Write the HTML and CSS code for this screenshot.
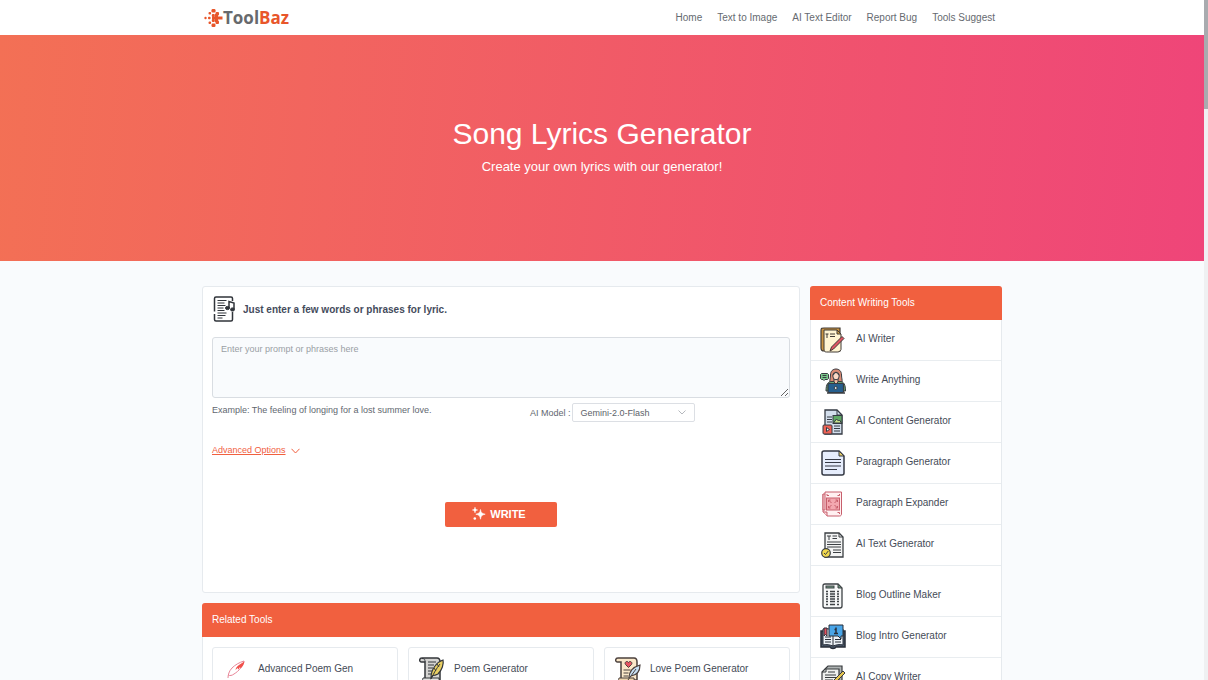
FILE: index.html
```html
<!DOCTYPE html>
<html lang="en">
  <head>
    <meta charset="UTF-8" />
    <meta name="viewport" content="width=device-width, initial-scale=1.0" />
    <title>Song Lyrics Generator - ToolBaz</title>
    <link rel="stylesheet" href="styles.css">
  </head>

  <body>
    <div class="page">
      <header class="header">
        <div class="container header-row">
          <a href="#" class="logo">
            <svg class="logo-mark" viewBox="0 0 19 20" aria-hidden="true">
              <g fill="#e8562a">
                <path d="M11 6h3v2.500h4.500v3H14V14h-3v-2.500H8v-3h3z" />
                <rect x="7.500" y="1" width="4" height="3.500" rx="1.200" />
                <rect x="7.500" y="15.500" width="4" height="3.500" rx="1.200" />
                <rect x="11.500" y="4" width="3.500" height="3.500" rx="1" />
                <rect x="11.500" y="12.500" width="3.500" height="3.500" rx="1" />
                <rect x="7.800" y="6" width="3" height="3" rx="1" />
                <rect x="7.800" y="11" width="3" height="3" rx="1" />
                <rect x="4.500" y="4" width="2.600" height="2.600" rx="1" />
                <rect x="4.500" y="13.400" width="2.600" height="2.600" rx="1" />
                <rect x="4" y="8.700" width="2.600" height="2.600" rx="1" />
                <circle cx="1.500" cy="10" r="1.200" />
              </g>
            </svg>
            <span class="logo-text">Tool<span class="logo-accent">Baz</span></span>
          </a>
          <nav class="nav">
            <a href="#">Home</a>
            <a href="#">Text to Image</a>
            <a href="#">AI Text Editor</a>
            <a href="#">Report Bug</a>
            <a href="#">Tools Suggest</a>
          </nav>
        </div>
      </header>

      <section class="hero">
        <h1>Song Lyrics Generator</h1>
        <p>Create your own lyrics with our generator!</p>
      </section>

      <div class="container layout">
        <main class="main">
          <form class="panel generator">
            <div class="generator-title">
              <svg class="icon" viewBox="0 0 26 26" fill="none" stroke="#30343a" aria-hidden="true">
                <path d="M20.500 5V2.500c0-1-.5-1.500-1.500-1.500H4C3 1 2.500 1.500 2.500 2.500v13M2.500 18v5.500c0 1 .5 1.500 1.500 1.500h15c1 0 1.500-.5 1.500-1.500V16" stroke-width="1.500" />
                <path d="M5.500 4.500h9M5.500 7h7M5.500 9.500h8M5.500 12h6M5.500 14.500h7M5.500 17h9M5.500 19.500h8M5.500 22h5" />
                <path d="M17 12V5.500l5 1.500v6" stroke-width="1.500" />
                <ellipse cx="15.500" cy="12" rx="2" ry="1.600" fill="#30343a" />
                <ellipse cx="20.500" cy="13.500" rx="2" ry="1.600" fill="#30343a" />
              </svg>
              <label for="prompt">Just enter a few words or phrases for lyric.</label>
            </div>
            <textarea id="prompt" class="prompt" placeholder="Enter your prompt or phrases here"></textarea>
            <div class="options">
              <p class="example">Example: The feeling of longing for a lost summer love.</p>
              <div class="model">
                <label for="model">AI Model :</label>
                <div class="select-wrap">
                  <select id="model">
                    <option>Gemini-2.0-Flash</option>
                  </select>
                  <svg class="select-arrow" viewBox="0 0 8 5" fill="none" stroke="#b5b8bd" aria-hidden="true">
                    <path d="M.5.5 4 4 7.500.5" />
                  </svg>
                </div>
              </div>
            </div>
            <a href="#" class="advanced">
              <span>Advanced Options</span>
              <svg viewBox="0 0 9 6" fill="none" stroke="#f1603f" aria-hidden="true"><path d="M.5.8 4.500 5 8.500.8" /></svg>
            </a>
            <button type="button" class="write-btn">
              <svg viewBox="0 0 14 14" fill="#fff" aria-hidden="true">
                <path d="M8.500 2.500c.5 3.200 1.300 4 4.700 4.700-3.400.7-4.200 1.500-4.700 5-.5-3.500-1.300-4.300-4.700-5 3.400-.7 4.200-1.500 4.700-4.700z" stroke="#fff" stroke-width=".6" />
                <path d="M3 0c.3 2 .9 2.600 2.800 3C3.900 3.400 3.300 4 3 6 2.700 4 2.100 3.400.2 3 2.100 2.600 2.700 2 3 0z" stroke="#fff" stroke-width=".4" />
                <circle cx="2.800" cy="11.500" r="1.300" />
              </svg>
              WRITE
            </button>
          </form>

          <section class="panel">
            <h2 class="panel-head">Related Tools</h2>
            <div class="related">
              <a href="#" class="card">
                <svg class="icon" viewBox="0 0 26 26" fill="none" aria-hidden="true">
                  <path d="M5 21c0-3 1-7 4-10 3-3 7-5.500 12-7-1 5-5 10-10 13-2 1.500-4 2-6 1" stroke="#e88698" />
                  <path d="M13 11c2-3 5-4.500 8.500-6.500-.5 3-2 5-4 7l-.5-1.500-1.500 2.500-1-1.500-2 2z" fill="#f1504a" />
                </svg>
                Advanced Poem Gen
              </a>
              <a href="#" class="card">
                <svg class="icon" viewBox="0 0 26 26" stroke="#33363a" aria-hidden="true">
                  <path d="M3 1h15c2 0 3 1.500 3 4v18H6V5H2.500C0 5 0 1 3 1z" fill="#d5d4d2" stroke-width="1.500" />
                  <path d="M3 1.500c3 0 3 1.500 3 3.500M9 5h8M9 8h6M9 11h5M9 14h4M9 17h3" fill="none" />
                  <path d="M4 21h16c0 3 1 4 3 4H7c-3 0-4-2-3-4z" fill="#e5e4e2" />
                  <path d="M12 21c0-4 1-8 4-12 2-3 5-5 8-6 1 4-1 10-5 14-2 1-3 1.500-5 1.500z" fill="#e9cf63" stroke-width="1.200" />
                  <path d="M12 22c3-6 5-10 9-15M15 11l2 3M18 7l2 3" fill="none" />
                </svg>
                Poem Generator
              </a>
              <a href="#" class="card">
                <svg class="icon" viewBox="0 0 26 26" stroke="#4b403d" aria-hidden="true">
                  <path d="M3 1h16c2 0 3 1.500 3 4v18H6V5H2.500C0 5 0 1 3 1z" fill="#fbe8c9" stroke-width="1.500" />
                  <path d="M4 21h15c0 3 1 4 3 4H7c-3 0-4-2-3-4z" fill="#efd5ac" />
                  <path d="M13.500 10.500 10.500 7.500c-1.500-2 1.500-4.500 3-2 1.500-2.500 4.500 0 3 2z" fill="#e65462" />
                  <path d="M8.500 13h7M8.500 16h5M8.500 19h5" fill="none" />
                  <path d="M14 21c0-6 4-11 11-13 0 5-2 10-9 11" fill="#c7dff2" stroke-width="1.200" />
                  <path d="m13 23 8-11" fill="none" />
                </svg>
                Love Poem Generator
              </a>
            </div>
          </section>
        </main>

        <aside class="panel sidebar">
          <h2 class="panel-head">Content Writing Tools</h2>
          <ul class="tools">
            <li>
              <a href="#">
                <svg class="icon" viewBox="0 0 26 26" stroke="#403a35" aria-hidden="true">
                  <path d="M1 3.500C1 1 2 1 4 1h16v23H4c-2 0-3-1-3-3z" fill="#c99342" stroke-width="1.200" />
                  <path d="M4 3h13l4 4v15.500c-1 2.500-3 2.500-4 2.500H6.500C4.500 25 4 24 4 22z" fill="#fff4d2" />
                  <path d="M17 3v4h4z" fill="#d3a34b" />
                  <path d="M5.500 7h3M7 7v4M10 7h5M10 9.500h5" fill="none" />
                  <path d="m10 24 1.500-4L22 9.500l2 2L13.500 22z" fill="#df5362" />
                </svg>
                AI Writer
              </a>
            </li>
            <li>
              <a href="#">
                <svg class="icon" viewBox="0 0 26 26" stroke="#393c42" aria-hidden="true">
                  <path d="M10 14c-.5-2 .5-4 .5-7 0-4 2.500-6 5.500-6s5.500 2 5.500 6c0 3 1 5 .5 7z" fill="#d98a74" />
                  <path d="M6 23c0-7 2-9.500 6-9.500h8c4 0 5.500 3.500 5.500 9.500z" fill="#6da874" />
                  <path d="M14 11h4v3l-2 2-2-2z" fill="#f3bda3" />
                  <ellipse cx="16" cy="8" rx="3.200" ry="3.800" fill="#fcd9c6" />
                  <path d="M12.500 7c2-1 3-2 3.500-3 .5 1 2 2.500 3.500 3" fill="none" />
                  <rect x="8" y="15.500" width="15.500" height="9" rx="1" fill="#265f8e" stroke-width="1.200" />
                  <circle cx="15.700" cy="20" r="1.500" fill="#d7e7f1" />
                  <path d="M7 25h18" stroke-width="1.500" />
                  <path d="M1.500 5.500h6l1 1v4l-1 1H5l-1 1-1-1H1.500l-1-1v-4z" fill="#79c78a" />
                  <path d="M2.500 7.500h4M2.500 9.500h4" />
                </svg>
                Write Anything
              </a>
            </li>
            <li>
              <a href="#">
                <svg class="icon" viewBox="0 0 26 26" stroke="#353a43" aria-hidden="true">
                  <path d="M5 1h12l5 5v19H5z" fill="#d3deec" stroke-width="1.300" />
                  <path d="M17 1v5h5M7 8h5M7 10.500h5M7 13h5M14 17h6M14 19.500h6M14 22h6" fill="none" />
                  <rect x="13" y="6.500" width="9" height="8" fill="#60a965" />
                  <path d="m13.500 14 3-4 2 2 1-1 2 3z" fill="#c8e28d" />
                  <rect x="3" y="16" width="9" height="9" rx="1" fill="#ed6255" />
                  <path d="m6.500 18.500 3 2-3 2z" fill="#fff" />
                </svg>
                AI Content Generator
              </a>
            </li>
            <li>
              <a href="#">
                <svg class="icon" viewBox="0 0 26 26" stroke="#353944" aria-hidden="true">
                  <path d="M4 1h15l5 5v17c0 1-.5 2-2 2H4c-1.500 0-2-.5-2-2V3c0-1.500.5-2 2-2z" fill="#e6edfc" stroke-width="1.500" />
                  <path d="M19 1v5h5z" fill="#e5ce67" />
                  <path d="M5 9.500h16M5 12.500h16M5 16h16M5 19.500h12" fill="none" stroke-width="1.200" />
                </svg>
                Paragraph Generator
              </a>
            </li>
            <li>
              <a href="#">
                <svg class="icon" viewBox="0 0 26 26" stroke="#c75f6c" aria-hidden="true">
                  <path d="M5 1h16.500v22c0 1-.5 2-2 2H7l-4-4V3" fill="#fff0f1" />
                  <path d="M5 1v18H3V3h2M7 25v-4H3" fill="#fbd5d9" />
                  <rect x="6.500" y="7" width="13" height="12" fill="#f3a7af" />
                  <path d="m8.500 9 3 3M8.500 11V9h2M17.500 9l-3 3M15.500 9h2v2M8.500 17l3-3M8.500 15v2h2M17.500 17l-3-3M15.500 17h2v-2M7 3v1.500h2M19.500 3v1.500h-2M19.500 23v-1.500h-2" fill="none" />
                </svg>
                Paragraph Expander
              </a>
            </li>
            <li>
              <a href="#">
                <svg class="icon" viewBox="0 0 26 26" stroke="#3b3f43" aria-hidden="true">
                  <path d="M5 1h14l4 4v20H5z" fill="#f3f4f4" stroke-width="1.300" />
                  <path d="M19 1v4h4M7 4h4M9 4v4M12.500 4H17M12.500 6.500H17M7 10h14M7 12.500h14M7 15h14M13 18h8M13 20.500h8" fill="none" />
                  <circle cx="6" cy="21" r="4.300" fill="#f2d94e" stroke-width="1.200" />
                  <path d="m4 21 1.500 1.500L8.300 19" fill="none" />
                </svg>
                AI Text Generator
              </a>
            </li>
            <li class="spaced">
              <a href="#">
                <svg class="icon" viewBox="0 0 26 26" stroke="#3e4245" aria-hidden="true">
                  <path d="M5 1h13l4 4v18c0 1.500-.5 2-2 2H5c-1.500 0-2-.5-2-2V3c0-1.500.5-2 2-2z" fill="#f7f8f8" stroke-width="1.300" />
                  <path d="M18 1v4h4z" fill="#6b927c" />
                  <rect x="6" y="3" width="8" height="2" fill="#709a83" />
                  <path d="M6 8.500h2M10 8.500h5M17 8.500h2M6 11h2M10 11h5M17 11h2M6 13.500h2M10 13.500h5M17 13.500h2M6 16h2M10 16h5M17 16h2M6 18.500h2M10 18.500h5M17 18.500h2M6 21.500h2M10 21.500h5M17 21.500h2" fill="none" stroke-width="1.300" />
                </svg>
                Blog Outline Maker
              </a>
            </li>
            <li>
              <a href="#">
                <svg class="icon" viewBox="0 0 26 26" stroke="#282e39" aria-hidden="true">
                  <path d="M1 7h24v16h-9c-1 2-5 2-6 0H1z" fill="#4b596a" stroke-width="1.500" />
                  <path d="M3 5c4-1 7 0 10 2 3-2 6-3 10-2v16c-4-1-7 0-10 1-3-1-6-2-10-1z" fill="#edf2f7" />
                  <path d="M13 7v15M5 13h6M5 15.500h6M5 18h6M15 15.500h6M15 18h6" fill="none" />
                  <path d="M4 4h3v8l-1.500-1.500L4 12z" fill="#e35361" />
                  <path d="M9 1h14v11h-2v3l-3-3H9z" fill="#49a5e8" />
                  <path d="M16 3.500v6M14.500 5.500H16M14 9.500h4" fill="none" stroke-width="1.500" />
                </svg>
                Blog Intro Generator
              </a>
            </li>
            <li>
              <a href="#">
                <svg class="icon" viewBox="0 0 26 26" stroke="#373a3d" aria-hidden="true">
                  <path d="M5 4 8 1h14v16h-3" fill="#aeb3b3" stroke-width="1.200" />
                  <path d="M2 7 5 4h14v21H2z" fill="#eff0ee" stroke-width="1.200" />
                  <path d="M2 7h4V4M8 7h7M5 10h11M5 12.500h11M5 15h8M5 18h7" fill="none" />
                  <path d="m10 21 2-4L23 6l2 2-11 11z" fill="#e6c652" />
                </svg>
                AI Copy Writer
              </a>
            </li>
          </ul>
        </aside>
      </div>
    </div>
    <div class="scroll-track"><div class="scroll-thumb"></div></div>
  </body>
</html>
```

FILE: styles.css
```css
* {
  box-sizing: border-box;
}

body {
  margin: 0;
  background-color: #f9fbfd;
  font-family: "Liberation Sans", Arial, sans-serif;
  font-size: 10px;
  color: #454b57;
}

h1,
h2,
p,
ul {
  margin: 0;
  padding: 0;
}

a {
  color: inherit;
  text-decoration: none;
}

/* the page scrolls inside this box, the slim bar sits beside it */
.page {
  height: 100vh;
  margin-right: 4px;
  overflow-y: auto;
  scrollbar-width: none;
}

.container {
  width: 100%;
  max-width: 800px;
  margin: 0 auto;
}

.header {
  background-color: #fff;
}

.header-row {
  display: flex;
  justify-content: space-between;
  align-items: center;
  height: 35px;
  padding: 0 7px 0 2px;
}

.logo {
  display: flex;
  align-items: center;
}

.logo-mark {
  width: 19px;
  height: 20px;
}

.logo-text {
  font-family: "Open Sans", sans-serif;
  font-size: 17px;
  line-height: 20px;
  font-weight: bold;
  color: #67696c;
}

.logo-accent {
  color: #e8562a;
}

.nav {
  display: flex;
  gap: 15px;
  color: #666a70;
}

.hero {
  display: flex;
  flex-direction: column;
  align-items: center;
  gap: 7px;
  padding: 81px 20px 87px;
  background: linear-gradient(95deg, #f37055, #ef4579);
  color: #fff;
  text-align: center;
}

.hero h1 {
  font-size: 30px;
  line-height: 36px;
  font-weight: normal;
}

.hero p {
  font-size: 13px;
  line-height: 15px;
}

.layout {
  display: grid;
  grid-template-columns: minmax(0, 1fr) 192px;
  gap: 10px;
  align-items: start;
  padding: 25px 0;
}

.main {
  display: grid;
  gap: 10px;
}

.panel {
  background-color: #fff;
  border: 1px solid #e6eaee;
  border-radius: 3px;
}

.panel-head {
  margin: -1px -1px 0;
  padding: 0 10px;
  border-radius: 3px 3px 0 0;
  background-color: #f1603f;
  color: #fff;
  font-size: 10px;
  line-height: 34px;
  font-weight: normal;
}

.icon {
  flex: none;
  width: 26px;
  height: 26px;
}

.generator {
  display: flex;
  flex-direction: column;
  min-height: 307px;
  padding: 9px;
}

.generator-title {
  display: flex;
  align-items: center;
  gap: 5px;
  color: #444b5c;
  font-weight: bold;
}

.prompt {
  width: 100%;
  height: 61px;
  margin-top: 15px;
  padding: 6px 8px;
  border: 1px solid #d9dde2;
  border-radius: 3px;
  background-color: #f9fbfd;
  font-family: inherit;
  font-size: 9px;
  line-height: 11px;
  resize: vertical;
}

.prompt::placeholder {
  color: #9a9fa5;
}

.options {
  display: grid;
  grid-template-columns: 55% 1fr;
  align-items: center;
  margin-top: 5px;
  font-size: 9px;
  color: #62676f;
}

.example {
  padding-bottom: 5px;
}

.model {
  display: flex;
  align-items: center;
  gap: 2px;
}

.select-wrap {
  position: relative;
  width: 123px;
}

.select-wrap select {
  appearance: none;
  display: block;
  width: 100%;
  height: 19px;
  padding: 0 7px;
  border: 1px solid #dcdfe4;
  border-radius: 2px;
  background-color: #fff;
  color: #5d6269;
  font-family: inherit;
  font-size: 9px;
}

.select-arrow {
  position: absolute;
  top: 7px;
  right: 9px;
  width: 8px;
  height: 5px;
  pointer-events: none;
}

.advanced {
  display: flex;
  align-items: center;
  align-self: flex-start;
  gap: 5px;
  margin-top: 23px;
  color: #f1603f;
  font-size: 9px;
  line-height: 11px;
}

.advanced span {
  text-decoration: underline;
}

.advanced svg {
  width: 9px;
  height: 6px;
}

.write-btn {
  display: flex;
  align-items: center;
  justify-content: center;
  align-self: center;
  gap: 4px;
  width: 112px;
  height: 25px;
  margin-top: 46px;
  padding: 0 4px 2px 0;
  border: 0;
  border-radius: 2px;
  background-color: #f1603f;
  color: #fff;
  font-family: inherit;
  font-size: 11px;
  font-weight: bold;
}

.write-btn svg {
  width: 14px;
  height: 14px;
}

.related {
  display: grid;
  grid-template-columns: repeat(3, 1fr);
  gap: 10px;
  padding: 10px 9px;
}

.card {
  display: flex;
  gap: 9px;
  padding: 9px 10px;
  border: 1px solid #e6eaee;
  border-radius: 3px;
  line-height: 24px;
}

.tools {
  list-style: none;
}

.tools li {
  border-bottom: 1px solid #e9edf0;
}

.tools a {
  display: flex;
  gap: 10px;
  padding: 7px 9px;
  line-height: 24px;
}

.tools .spaced {
  padding-top: 10px;
}

.scroll-track {
  position: fixed;
  top: 0;
  right: 0;
  bottom: 0;
  width: 4px;
  background-color: #eff0f2;
}

.scroll-thumb {
  height: 16%;
  background-color: #a9abaf;
}
```
